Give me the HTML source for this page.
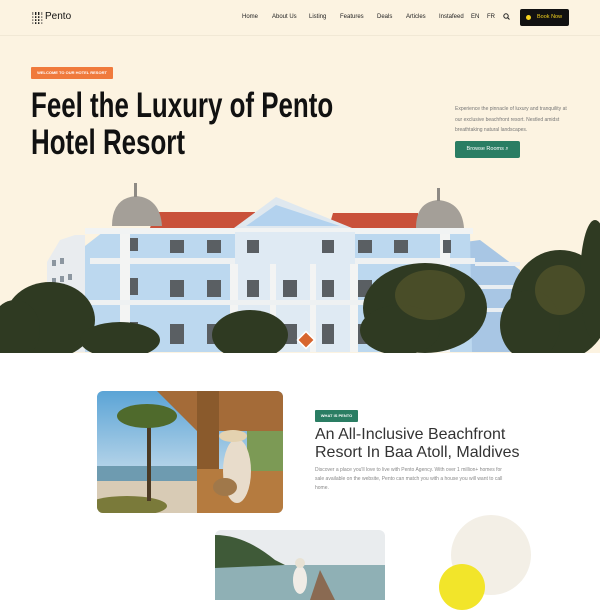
<!DOCTYPE html>
<html><head><meta charset="utf-8"><style>
*{margin:0;padding:0;box-sizing:border-box}
body{width:600px;height:600px;overflow:hidden;background:#fff;font-family:"Liberation Sans",sans-serif;position:relative}
.abs{position:absolute}
.hero{position:absolute;left:0;top:0;width:600px;height:353px;background:#fcf3e1}
.hdr{position:absolute;left:0;top:0;width:600px;height:36px;border-bottom:1px solid #f1e8d5}
.nav{position:absolute;top:14px;font-size:6px;color:#222}
.h1{position:absolute;left:31px;font-size:35px;font-weight:bold;color:#111;white-space:nowrap;transform-origin:0 0;line-height:1}
</style></head><body>
<div class="hero">
 <div class="hdr"></div>
 <svg class="abs" style="left:31px;top:12px" width="12" height="12" viewBox="0 0 12 12">
  <g fill="#222"><rect x="1" y="0" width="1.4" height="12" opacity=".5"/><rect x="4" y="0" width="1.4" height="12"/><rect x="7" y="0" width="1.4" height="12"/><rect x="10" y="0" width="1.4" height="12" opacity=".5"/><rect x="0" y="3" width="12" height="1.2" fill="#fcf3e1"/><rect x="0" y="6" width="12" height="1.2" fill="#fcf3e1"/><rect x="0" y="9" width="12" height="1.2" fill="#fcf3e1"/></g>
 </svg>
 <div class="abs" style="left:45px;top:11px;font-size:10px;color:#111">Pento</div>
 <div class="nav" style="left:242px">Home</div>
 <div class="nav" style="left:272px">About Us</div>
 <div class="nav" style="left:309px">Listing</div>
 <div class="nav" style="left:340px">Features</div>
 <div class="nav" style="left:377px">Deals</div>
 <div class="nav" style="left:406px">Articles</div>
 <div class="nav" style="left:439px">Instafeed</div>
 <div class="nav" style="left:471px">EN</div>
 <div class="nav" style="left:487px">FR</div>
 <svg class="abs" style="left:503px;top:13px" width="7" height="7" viewBox="0 0 7 7"><circle cx="3" cy="3" r="2.2" fill="none" stroke="#222" stroke-width="1"/><line x1="4.6" y1="4.6" x2="6.5" y2="6.5" stroke="#222" stroke-width="1"/></svg>
 <div class="abs" style="left:520px;top:9px;width:49px;height:17px;background:#111;border-radius:2px"></div>
 <div class="abs" style="left:537px;top:14px;color:#f4d21e;font-size:5.5px">Book Now</div>
 <div class="abs" style="left:526px;top:15px;width:5px;height:5px;border-radius:50%;background:#f4d21e"></div>
 <div class="abs" style="left:31px;top:67px;width:82px;height:12px;background:#f07a3c;border-radius:1px;color:#fff;font-size:4px;line-height:12px;text-align:center;font-weight:bold">WELCOME TO OUR HOTEL RESORT</div>
 <div class="h1" style="top:88px;transform:scaleX(0.74)">Feel the Luxury of Pento</div>
 <div class="h1" style="top:125px;transform:scaleX(0.74)">Hotel Resort</div>
 <div class="abs" style="left:455px;top:104px;width:120px;font-size:5px;line-height:10.5px;color:#777">Experience the pinnacle of luxury and tranquility at our exclusive beachfront resort. Nestled amidst breathtaking natural landscapes.</div>
 <div class="abs" style="left:455px;top:141px;width:65px;height:17px;background:#2a7d63;border-radius:2px;color:#fff;font-size:5.5px;line-height:17px;text-align:center">Browse Rooms &#8981;</div>
 <svg class="abs" style="left:0;top:180px" width="600" height="173" viewBox="0 180 600 173">
  <polygon points="47,262 60,240 75,235 85,235 85,352 47,352" fill="#e9ecef"/>
  <g fill="#8c96a0"><rect x="52" y="260" width="4" height="6"/><rect x="60" y="258" width="4" height="6"/><rect x="52" y="278" width="4" height="6"/><rect x="60" y="276" width="4" height="6"/><rect x="68" y="274" width="4" height="6"/></g>
  <polygon points="465,242 480,240 520,270 520,352 465,352" fill="#a8c6e4"/>
  <g fill="#e9eef2"><rect x="475" y="262" width="45" height="4"/><rect x="475" y="285" width="45" height="4"/><rect x="475" y="308" width="45" height="4"/></g>
  <polygon points="155,212 255,212 260,228 150,228" fill="#c9513a"/>
  <polygon points="333,213 418,213 420,230 328,230" fill="#c9513a"/>
  <polygon points="85,246 103,232 470,232 472,352 85,352" fill="#bcd8ef"/>
  <polygon points="234,228 276,197 352,228" fill="#dfe8ef"/>
  <polygon points="246,226 276,205 340,226" fill="#b3d2ee"/>
  <rect x="90" y="258" width="385" height="6" fill="#eef1f2"/>
  <rect x="85" y="228" width="388" height="6" fill="#f1f3f3"/>
  <rect x="235" y="232" width="120" height="120" fill="#dfeaf3"/>
  <g fill="#f3f4f3"><rect x="120" y="234" width="10" height="118"/><rect x="230" y="264" width="8" height="88"/><rect x="270" y="264" width="6" height="88"/><rect x="310" y="264" width="6" height="88"/><rect x="350" y="264" width="8" height="88"/><rect x="440" y="234" width="10" height="118"/></g>
  <rect x="85" y="300" width="388" height="5" fill="#eef1f2"/>
  <path d="M112,226 Q112,198 136,196 Q160,198 162,226 Z" fill="#a49f98"/>
  <rect x="134" y="183" width="3" height="14" fill="#8e8a84"/>
  <path d="M416,228 Q416,202 438,200 Q462,202 464,228 Z" fill="#a49f98"/>
  <rect x="437" y="188" width="3" height="13" fill="#8e8a84"/>
  <g fill="#5a5f63">
   <rect x="130" y="238" width="8" height="13"/><rect x="170" y="240" width="14" height="13"/><rect x="207" y="240" width="14" height="13"/><rect x="247" y="240" width="12" height="13"/><rect x="322" y="240" width="12" height="13"/><rect x="358" y="240" width="14" height="13"/><rect x="394" y="240" width="14" height="13"/><rect x="443" y="240" width="8" height="13"/>
   <rect x="130" y="278" width="8" height="17"/><rect x="170" y="280" width="14" height="17"/><rect x="207" y="280" width="14" height="17"/><rect x="247" y="280" width="12" height="17"/><rect x="283" y="280" width="14" height="17"/><rect x="322" y="280" width="12" height="17"/><rect x="358" y="280" width="14" height="17"/><rect x="394" y="280" width="14" height="17"/><rect x="443" y="280" width="8" height="17"/>
   <rect x="130" y="322" width="8" height="20"/><rect x="170" y="324" width="14" height="20"/><rect x="207" y="324" width="14" height="20"/><rect x="283" y="324" width="14" height="20"/><rect x="322" y="324" width="12" height="20"/><rect x="358" y="324" width="14" height="20"/>
  </g>
  <g fill="#2f3a22">
   <ellipse cx="50" cy="320" rx="45" ry="38"/><ellipse cx="15" cy="330" rx="25" ry="30"/><ellipse cx="120" cy="340" rx="40" ry="18"/>
   <ellipse cx="250" cy="335" rx="38" ry="25"/>
   <ellipse cx="425" cy="308" rx="62" ry="45"/><ellipse cx="400" cy="330" rx="40" ry="25"/>
   <ellipse cx="560" cy="305" rx="50" ry="55"/><ellipse cx="530" cy="325" rx="30" ry="35"/><ellipse cx="595" cy="280" rx="15" ry="60"/>
  </g>
  <g fill="#5b5a2d" opacity=".6"><ellipse cx="430" cy="295" rx="35" ry="25"/><ellipse cx="560" cy="290" rx="25" ry="25"/></g>
  <rect x="300" y="334" width="12" height="12" transform="rotate(45 306 340)" fill="#d7652e" stroke="#fff" stroke-width="1.5"/>
 </svg>
</div>
<svg class="abs" style="left:97px;top:391px" width="186" height="122" viewBox="0 0 186 122">
 <defs><clipPath id="c1"><rect width="186" height="122" rx="6"/></clipPath>
 <linearGradient id="sk" x1="0" y1="0" x2="0" y2="1"><stop offset="0" stop-color="#5ba4d6"/><stop offset="1" stop-color="#e7eef3"/></linearGradient></defs>
 <g clip-path="url(#c1)">
  <rect width="186" height="122" fill="url(#sk)"/>
  <rect y="75" width="100" height="15" fill="#6e9bb0"/>
  <rect y="90" width="100" height="32" fill="#d8cbb5"/>
  <ellipse cx="30" cy="115" rx="40" ry="10" fill="#7a7a3a"/>
  <rect x="50" y="30" width="4" height="80" fill="#4b3a24"/>
  <ellipse cx="50" cy="25" rx="30" ry="12" fill="#4f6a2c"/>
  <polygon points="60,0 186,0 186,40 100,40" fill="#a46b38"/>
  <rect x="100" y="0" width="22" height="122" fill="#8a5a2c"/>
  <rect x="100" y="78" width="86" height="44" fill="#b57b3f"/>
  <rect x="150" y="40" width="36" height="40" fill="#7c9a55"/>
  <ellipse cx="140" cy="80" rx="14" ry="32" fill="#e8dccb"/>
  <ellipse cx="136" cy="45" rx="14" ry="6" fill="#e4d2b0"/>
  <ellipse cx="128" cy="96" rx="12" ry="9" fill="#a0784a"/>
 </g>
</svg>
<svg class="abs" style="left:215px;top:530px" width="170" height="70" viewBox="0 0 170 70">
 <defs><clipPath id="c2"><rect width="170" height="80" rx="6"/></clipPath></defs>
 <g clip-path="url(#c2)">
  <rect width="170" height="70" fill="#e9ecee"/>
  <rect y="35" width="170" height="35" fill="#8fb0b5"/>
  <path d="M0,5 Q30,5 60,30 L70,35 L0,38 Z" fill="#3f5a38"/>
  <polygon points="95,70 105,40 120,70" fill="#8a6a52"/>
  <ellipse cx="85" cy="50" rx="7" ry="14" fill="#f0ece6"/>
  <circle cx="85" cy="33" r="5" fill="#e8e2d4"/>
 </g>
</svg>
<div class="abs" style="left:315px;top:410px;width:43px;height:12px;background:#2a7d63;border-radius:1px;color:#fff;font-size:4px;line-height:12px;text-align:center;font-weight:bold">WHAT IS PENTO</div>
<div class="abs" style="left:315px;top:426px;font-size:16px;line-height:18px;color:#333">An All-Inclusive Beachfront<br>Resort In Baa Atoll, Maldives</div>
<div class="abs" style="left:315px;top:466px;width:190px;font-size:5px;line-height:9px;color:#888">Discover a place you'll love to live with Pento Agency. With over 1 million+ homes for sale available on the website, Pento can match you with a house you will want to call home.</div>
<div class="abs" style="left:451px;top:515px;width:80px;height:80px;border-radius:50%;background:#f3efe6"></div>
<div class="abs" style="left:439px;top:564px;width:46px;height:46px;border-radius:50%;background:#f2e52a"></div>
</body></html>
